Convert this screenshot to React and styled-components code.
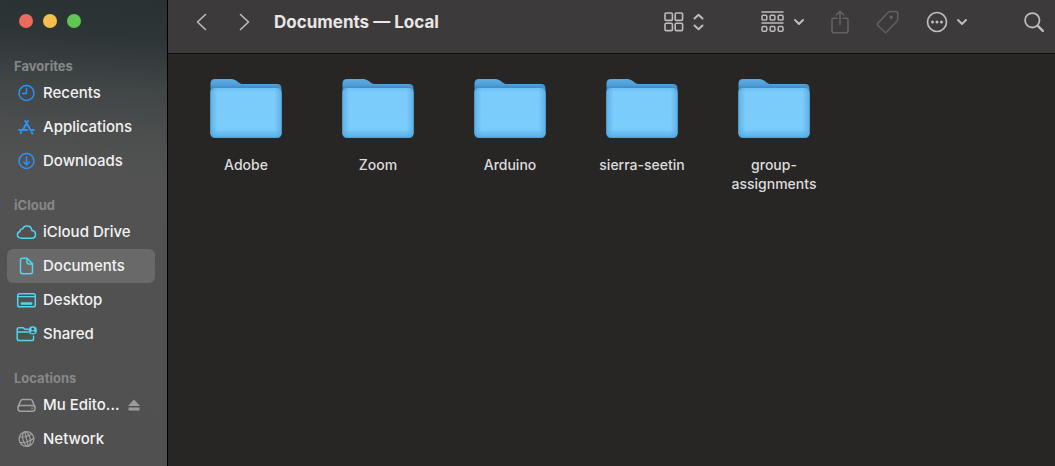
import React from "react";
import styled, { createGlobalStyle } from "styled-components";

const GlobalStyle = createGlobalStyle`
  *, *::before, *::after { box-sizing: border-box; }
  body {
    margin: 0;
    background: #272625;
    font-family: Inter, "Liberation Sans", sans-serif;
    -webkit-font-smoothing: antialiased;
  }
`;

const Window = styled.div`
  display: flex;
  min-height: 100vh;
  background: #272625;
`;

const Sidebar = styled.aside`
  flex: 0 0 168px;
  padding: 0 12px 10px 7px;
  border-right: 1px solid #000;
  background: linear-gradient(184deg, #293133 0, #2e3537 40px, #404546 90px, #4c4e4e 135px, #525252 180px, #505050 100%);
`;

const TrafficLights = styled.div`
  display: flex;
  gap: 10px;
  height: 56px;
  padding: 14px 0 0 12px;
`;

const Light = styled.button`
  width: 14px;
  height: 14px;
  padding: 0;
  border: 0;
  border-radius: 50%;
  background: ${(p) => p.$color};
`;

const Group = styled.section`
  margin-bottom: 17px;
`;

const GroupTitle = styled.h2`
  margin: 0;
  padding-left: 7px;
  font-size: 13px;
  line-height: 20px;
  font-weight: 700;
  color: #868888;
`;

const List = styled.ul`
  margin: 0;
  padding: 0;
  list-style: none;
`;

const Row = styled.li`
  display: flex;
  align-items: center;
  height: 34px;
  border-radius: 6px;
  background: ${(p) => (p.$active ? "#696969" : "transparent")};
`;

const Place = styled.a`
  display: flex;
  align-items: center;
  gap: 6px;
  padding-left: 9px;
  font-size: 15px;
  line-height: 20px;
  font-weight: 500;
  color: #f2f2f2;
  text-decoration: none;
  white-space: nowrap;
`;

const PlaceIcon = styled.svg`
  flex: none;
  width: 21px;
  height: 20px;
  fill: none;
  stroke: ${(p) => p.$color};
  color: ${(p) => p.$color};
  stroke-width: 1.5;
  stroke-linecap: round;
  stroke-linejoin: round;
`;

const IconButton = styled.button`
  display: flex;
  align-items: center;
  gap: ${(p) => p.$gap || 0}px;
  padding: 0;
  border: 0;
  background: none;
  color: ${(p) => (p.$dim ? "#646262" : "#bdbbbb")};
`;

const Eject = styled(IconButton)`
  margin-left: 9px;
  color: #9b9b9b;
`;

const Main = styled.main`
  flex: 1;
  min-width: 0;
`;

const Toolbar = styled.header`
  display: flex;
  align-items: center;
  justify-content: space-between;
  height: 54px;
  padding: 0 11px 10px 28px;
  border-bottom: 1px solid #111;
  background: #3d3a3b;
`;

const Navigation = styled.div`
  display: flex;
  align-items: center;
`;

const Arrows = styled.nav`
  display: flex;
  gap: 32px;
  margin-right: 24px;
`;

const Title = styled.h1`
  margin: 0;
  font-size: 17px;
  line-height: 20px;
  font-weight: 700;
  color: #e8e6e6;
  white-space: nowrap;
`;

const Tools = styled.div`
  display: flex;
  align-items: center;
  gap: 57px;
`;

const Actions = styled.div`
  display: flex;
  align-items: center;
  gap: 27px;
`;

const Glyph = styled.svg`
  display: block;
  flex: none;
  fill: none;
  stroke: currentColor;
  stroke-width: ${(p) => p.$weight || 1.6};
  stroke-linecap: round;
  stroke-linejoin: round;
`;

const Folders = styled.ul`
  display: grid;
  grid-template-columns: repeat(auto-fill, 132px);
  row-gap: 24px;
  margin: 0;
  padding: 25px 12px;
  list-style: none;
`;

const FolderLink = styled.a`
  display: flex;
  flex-direction: column;
  align-items: center;
  gap: 16px;
  color: #dddcdc;
  font-size: 14px;
  line-height: 19px;
  font-weight: 500;
  text-align: center;
  text-decoration: none;
`;

const FolderLabel = styled.span`
  width: 100px;
`;

const BLUE = "#2b93f8";
const CYAN = "#4fd6ee";
const GREY = "#a0a0a0";

const icons = {
  recents: (
    <>
      <circle cx="10.5" cy="10" r="7.5" />
      <path d="M10.5 5.2V10.4H6.7" />
    </>
  ),
  applications: (
    <g strokeWidth="2">
      <path d="M9.2 4 14.2 12.6M15.6 15 16.4 16.4M11.9 4 6.6 13M5.4 15 4.7 16.1M3.2 12.9H11M14.6 12.9H17.8" />
    </g>
  ),
  downloads: (
    <>
      <circle cx="10.5" cy="10" r="7.5" />
      <path d="M10.5 6V13.4M7.8 11 10.5 13.7 13.2 11" />
    </>
  ),
  cloud: (
    <path d="M5.4 16.2C3 16.2 1.4 14.8 1.4 12.8 1.4 11.1 2.5 9.9 4 9.5 3.9 7.8 5 6.8 6.5 6.9 7.3 5.1 8.9 4 10.9 4 13.7 4 15.7 6 15.9 8.6 18 8.8 19.5 10.3 19.5 12.4 19.5 14.6 17.8 16.2 15.6 16.2Z" />
  ),
  document: (
    <>
      <path d="M6.2 2.3H11L16.5 7.9V15.8Q16.5 17.7 14.6 17.7H6.4Q4.5 17.7 4.5 15.8V4.2Q4.5 2.3 6.4 2.3" />
      <path d="M11 2.5V6.6Q11 8 12.4 8H16.3" />
    </>
  ),
  desktop: (
    <>
      <rect x="1.7" y="3.7" width="17.6" height="13" rx="1.8" />
      <path d="M2 6.6H19" strokeWidth="1.2" />
      <path d="M5.4 13H15.6V14.1H5.4Z" fill="currentColor" />
    </>
  ),
  shared: (
    <>
      <path d="M12.2 5.2H8.8L7.2 3.8H2.9Q1.2 3.8 1.2 5.5V14.5Q1.2 16.6 3.2 16.6H15.6Q17.6 16.6 17.6 14.5V12.2M1.5 7.9H12.2" />
      <circle cx="16.8" cy="6.4" r="4.1" fill="currentColor" stroke="none" />
      <circle cx="16.8" cy="5.1" r="1.4" fill="#505050" stroke="none" />
      <path d="M14.3 8.5Q16.8 5.9 19.3 8.5Q16.8 10.2 14.3 8.5" fill="#505050" stroke="none" />
    </>
  ),
  drive: (
    <>
      <path d="M2.2 11.6 4.7 5.6Q5.2 4.4 6.5 4.4H14.5Q15.8 4.4 16.3 5.6L18.8 11.6" />
      <rect x="2" y="10.4" width="17" height="5.8" rx="2.4" />
      <path d="M15.9 13.3H16.1" strokeWidth="1.6" />
    </>
  ),
  network: (
    <g strokeWidth="1.2">
      <circle cx="10.5" cy="10" r="7.4" />
      <ellipse cx="10.5" cy="10" rx="3.6" ry="7.4" transform="rotate(-14 10.5 10)" />
      <path d="M8.8 2.8 12.3 17.2M3.4 8.2Q9.5 8.6 16 5.2M4 13.6Q12.2 13.8 17.8 9.3" />
    </g>
  ),
};

const groups = [
  {
    title: "Favorites",
    color: BLUE,
    items: [
      ["Recents", "recents"],
      ["Applications", "applications"],
      ["Downloads", "downloads"],
    ],
  },
  {
    title: "iCloud",
    color: CYAN,
    items: [
      ["iCloud Drive", "cloud"],
      ["Documents", "document"],
      ["Desktop", "desktop"],
      ["Shared", "shared"],
    ],
  },
  {
    title: "Locations",
    color: GREY,
    items: [
      ["Mu Edito...", "drive"],
      ["Network", "network"],
    ],
  },
];

const folders = ["Adobe", "Zoom", "Arduino", "sierra-seetin", "group-assignments"];

const ChevronDown = () => (
  <Glyph width="10" height="8" $weight={2}>
    <path d="M1 2 5 6 9 2" />
  </Glyph>
);

const FolderArt = () => (
  <svg width="72" height="60" viewBox="0 0 72 60" aria-hidden="true">
    <path d="M0.5 55V4.5Q0.5 0 5 0H21.5Q24 0 26 1.5L29 3.8Q30.6 5 33 5H67Q71.5 5 71.5 9.5V55Z" fill="url(#folderBack)" />
    <rect x="0.5" y="9" width="71" height="50" rx="4.5" fill="url(#folderFront)" />
    <rect x="0.5" y="9" width="71" height="50" rx="4.5" fill="url(#folderSides)" />
    <path d="M1 53.5H71M1 55.5H71" stroke="#5fb4ea" opacity="0.5" />
  </svg>
);

const HiddenDefs = styled.svg`
  position: absolute;
`;

const FolderGradients = () => (
  <HiddenDefs width="0" height="0" aria-hidden="true">
    <defs>
      <linearGradient id="folderBack" x1="0" y1="0" x2="0" y2="1">
        <stop offset="0" stopColor="#5bace2" />
        <stop offset="0.1" stopColor="#519fd8" />
        <stop offset="0.17" stopColor="#3f87c8" />
        <stop offset="1" stopColor="#3f87c8" />
      </linearGradient>
      <linearGradient id="folderFront" x1="0" y1="0" x2="0" y2="1">
        <stop offset="0" stopColor="#6cc0f3" />
        <stop offset="0.08" stopColor="#7bcbfb" />
        <stop offset="0.8" stopColor="#7bcdfc" />
        <stop offset="0.9" stopColor="#6ec2f4" />
        <stop offset="0.96" stopColor="#5fb3e9" />
        <stop offset="1" stopColor="#4c9fd9" />
      </linearGradient>
      <linearGradient id="folderSides" x1="0" y1="0" x2="1" y2="0">
        <stop offset="0" stopColor="#4a9fd8" stopOpacity="0.6" />
        <stop offset="0.1" stopColor="#4a9fd8" stopOpacity="0" />
        <stop offset="0.9" stopColor="#4a9fd8" stopOpacity="0" />
        <stop offset="1" stopColor="#4a9fd8" stopOpacity="0.6" />
      </linearGradient>
    </defs>
  </HiddenDefs>
);

export default function App() {
  return (
    <Window>
      <GlobalStyle />
      <FolderGradients />
      <Sidebar>
        <TrafficLights>
          <Light $color="#ed6a5e" aria-label="Close" />
          <Light $color="#f5bf4f" aria-label="Minimize" />
          <Light $color="#61c554" aria-label="Zoom window" />
        </TrafficLights>
        {groups.map((group) => (
          <Group key={group.title}>
            <GroupTitle>{group.title}</GroupTitle>
            <List>
              {group.items.map(([name, icon]) => (
                <Row key={name} $active={name === "Documents"}>
                  <Place href="#">
                    <PlaceIcon $color={group.color} viewBox="0 0 21 20" aria-hidden="true">
                      {icons[icon]}
                    </PlaceIcon>
                    {name}
                  </Place>
                  {icon === "drive" && (
                    <Eject aria-label="Eject">
                      <svg width="12" height="12" fill="currentColor">
                        <path d="M6 0.5 12 7H0ZM0.5 8.5H11.5V11.5H0.5Z" />
                      </svg>
                    </Eject>
                  )}
                </Row>
              ))}
            </List>
          </Group>
        ))}
      </Sidebar>
      <Main>
        <Toolbar>
          <Navigation>
            <Arrows>
              <IconButton aria-label="Back">
                <Glyph width="11" height="18">
                  <path d="M9.5 1.5 1.5 9 9.5 16.5" />
                </Glyph>
              </IconButton>
              <IconButton aria-label="Forward">
                <Glyph width="11" height="18">
                  <path d="M1.5 1.5 9.5 9 1.5 16.5" />
                </Glyph>
              </IconButton>
            </Arrows>
            <Title>Documents — Local</Title>
          </Navigation>
          <Tools>
            <IconButton $gap={9} aria-label="View as icons">
              <Glyph width="20" height="20">
                <rect x="1" y="1" width="7.4" height="7.4" rx="1.2" />
                <rect x="11.2" y="1" width="7.4" height="7.4" rx="1.2" />
                <rect x="1" y="11.2" width="7.4" height="7.4" rx="1.2" />
                <rect x="11.2" y="11.2" width="7.4" height="7.4" rx="1.2" />
              </Glyph>
              <Glyph width="11" height="18" $weight={2}>
                <path d="M1.5 5.5 5.5 1.8 9.5 5.5M1.5 12.5 5.5 16.2 9.5 12.5" />
              </Glyph>
            </IconButton>
            <Actions>
              <IconButton $gap={9} aria-label="Group items">
                <Glyph width="24" height="22" $weight={1.5}>
                  <path d="M1 1H22M1 12H22" />
                  <rect x="1" y="4.3" width="4.8" height="4.8" rx="1.2" />
                  <rect x="9.1" y="4.3" width="4.8" height="4.8" rx="1.2" />
                  <rect x="17.2" y="4.3" width="4.8" height="4.8" rx="1.2" />
                  <rect x="1" y="15.5" width="4.8" height="4.8" rx="1.2" />
                  <rect x="9.1" y="15.5" width="4.8" height="4.8" rx="1.2" />
                  <rect x="17.2" y="15.5" width="4.8" height="4.8" rx="1.2" />
                </Glyph>
                <ChevronDown />
              </IconButton>
              <IconButton $dim aria-label="Share">
                <Glyph width="18" height="24">
                  <path d="M6 8.2H3Q1 8.2 1 10.2V20.8Q1 22.8 3 22.8H15Q17 22.8 17 20.8V10.2Q17 8.2 15 8.2H12M9 14.5V1.5M5.2 5 9 1.3 12.8 5" />
                </Glyph>
              </IconButton>
              <IconButton $dim aria-label="Tags">
                <Glyph width="23" height="24" $weight={1.4}>
                  <path d="M1.8 13.2 12 2.6Q13 1.5 14.4 1.5H19.2Q21.8 1.5 21.8 4V8.8Q21.8 10.2 20.8 11.2L10.8 21.8Q9.6 23 8.4 21.8L1.8 15.4Q0.8 14.3 1.8 13.2Z" />
                  <circle cx="15.3" cy="7.3" r="1" fill="currentColor" />
                </Glyph>
              </IconButton>
              <IconButton $gap={9} aria-label="More actions">
                <Glyph width="22" height="22" $weight={1.7}>
                  <circle cx="11" cy="11" r="9.5" />
                  <g fill="currentColor" stroke="none">
                    <circle cx="6.5" cy="11" r="1.5" />
                    <circle cx="11" cy="11" r="1.5" />
                    <circle cx="15.5" cy="11" r="1.5" />
                  </g>
                </Glyph>
                <ChevronDown />
              </IconButton>
            </Actions>
            <IconButton aria-label="Search">
              <Glyph width="20" height="20" $weight={1.8}>
                <circle cx="8.3" cy="8.3" r="7.2" />
                <path d="M13.8 13.8 18.8 18.8" strokeWidth="2.4" />
              </Glyph>
            </IconButton>
          </Tools>
        </Toolbar>
        <Folders>
          {folders.map((name) => (
            <li key={name}>
              <FolderLink href="#">
                <FolderArt />
                <FolderLabel>{name}</FolderLabel>
              </FolderLink>
            </li>
          ))}
        </Folders>
      </Main>
    </Window>
  );
}
